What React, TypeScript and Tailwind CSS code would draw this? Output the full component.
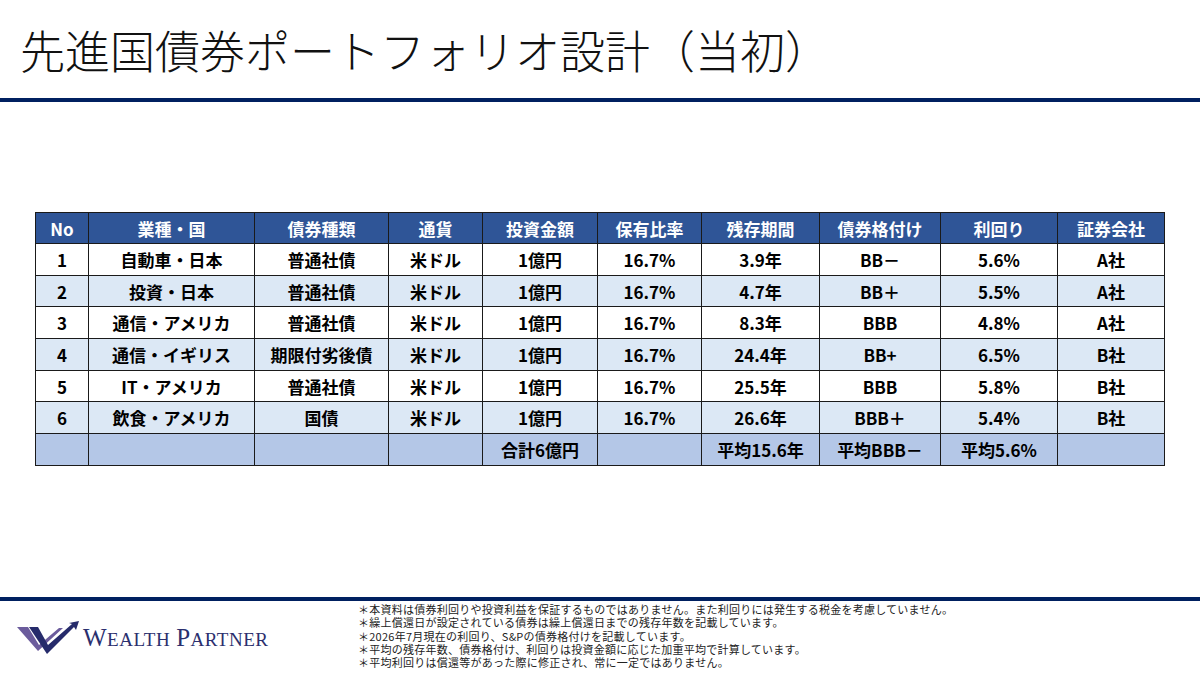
const headers = ["No", "業種・国", "債券種類", "通貨", "投資金額", "保有比率", "残存期間", "債券格付け", "利回り", "証券会社"];

const widths = [53, 166, 134, 94, 115, 104, 118, 121, 117, 107];

const rows = [
  ["1", "自動車・日本", "普通社債", "米ドル", "1億円", "16.7%", "3.9年", "BB－", "5.6%", "A社"],
  ["2", "投資・日本", "普通社債", "米ドル", "1億円", "16.7%", "4.7年", "BB＋", "5.5%", "A社"],
  ["3", "通信・アメリカ", "普通社債", "米ドル", "1億円", "16.7%", "8.3年", "BBB", "4.8%", "A社"],
  ["4", "通信・イギリス", "期限付劣後債", "米ドル", "1億円", "16.7%", "24.4年", "BB+", "6.5%", "B社"],
  ["5", "IT・アメリカ", "普通社債", "米ドル", "1億円", "16.7%", "25.5年", "BBB", "5.8%", "B社"],
  ["6", "飲食・アメリカ", "国債", "米ドル", "1億円", "16.7%", "26.6年", "BBB＋", "5.4%", "B社"],
];

const totals = ["", "", "", "", "合計6億円", "", "平均15.6年", "平均BBB－", "平均5.6%", ""];

const notes = [
  "＊本資料は債券利回りや投資利益を保証するものではありません。また利回りには発生する税金を考慮していません。",
  "＊繰上償還日が設定されている債券は繰上償還日までの残存年数を記載しています。",
  "＊2026年7月現在の利回り、S&Pの債券格付けを記載しています。",
  "＊平均の残存年数、債券格付け、利回りは投資金額に応じた加重平均で計算しています。",
  "＊平均利回りは償還等があった際に修正され、常に一定ではありません。",
];

function LogoMark() {
  return (
    <svg width="66" height="36" viewBox="0 0 66 36">
      <polygon points="2,8 13,8 24,26 44,9 48,9 23,32" fill="#6b5c9c" />
      <polygon points="14,8 23,8 33,26 57,5 54,4 64,2 61,11 59,8 32,35" fill="#262b6b" />
    </svg>
  );
}

export default function App() {
  return (
    <div
      className="w-[1200px] h-[675px] bg-white flex flex-col overflow-hidden"
      style={{ fontFamily: '"Noto Sans CJK JP", "Noto Sans", sans-serif' }}
    >
      <div className="h-[98px] flex items-center pl-[20px]">
        <h1 className="text-[45px] font-light text-[#111] leading-none">先進国債券ポートフォリオ設計（当初）</h1>
      </div>
      <div className="h-[4px] bg-[#002060]" />

      <div className="flex-1 pt-[110px] pl-[35px]">
        <table className="border-collapse table-fixed w-[1129px] text-[17px] font-bold text-black">
          <colgroup>
            {widths.map((w, i) => (
              <col key={i} style={{ width: w }} />
            ))}
          </colgroup>
          <thead>
            <tr className="bg-[#2f5597] text-white">
              {headers.map((h) => (
                <th key={h} className="h-[31px] border border-[#1a1a1a] text-center font-bold leading-none">
                  {h}
                </th>
              ))}
            </tr>
          </thead>
          <tbody>
            {rows.map((r, i) => (
              <tr key={i} className={i % 2 === 0 ? "bg-white" : "bg-[#dce8f5]"}>
                {r.map((c, j) => (
                  <td key={j} className="h-[31.7px] border border-[#1a1a1a] text-center leading-none">
                    {c}
                  </td>
                ))}
              </tr>
            ))}
            <tr className="bg-[#b4c7e7]">
              {totals.map((c, j) => (
                <td key={j} className="h-[31.7px] border border-[#1a1a1a] text-center leading-none">
                  {c}
                </td>
              ))}
            </tr>
          </tbody>
        </table>
      </div>

      <div className="h-[4px] bg-[#002060]" />
      <div className="h-[74px] flex">
        <div className="w-[358px] flex items-center pl-[15px] gap-[2px] pb-[2px]">
          <LogoMark />
          <div
            className="text-[#2b2f6e] leading-none flex items-baseline tracking-[0.5px]"
            style={{ fontFamily: '"Liberation Serif", serif' }}
          >
            <span className="text-[25px]">W</span>
            <span className="text-[19px]">EALTH</span>
            <span className="text-[25px] ml-[6px]">P</span>
            <span className="text-[19px]">ARTNER</span>
          </div>
        </div>
        <div className="pt-[2px] text-[11px] leading-[13.3px] tracking-[0.25px] text-[#222]">
          {notes.map((n) => (
            <div key={n} className="h-[13.3px]">
              {n}
            </div>
          ))}
        </div>
      </div>
    </div>
  );
}
